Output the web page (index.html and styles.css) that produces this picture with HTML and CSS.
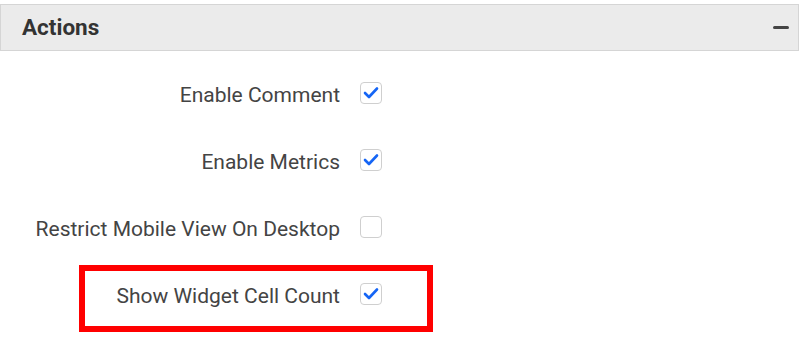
FILE: index.html
```html
<!DOCTYPE html>
<html>
<head>
<meta charset="utf-8">
<link rel="stylesheet" href="styles.css">
</head>
<body>
<div class="panel">
  <div class="panel-header">
    <span class="panel-title">Actions</span>
    <span class="collapse"></span>
  </div>
  <div class="rows">
    <div class="row">
      <span class="label">Enable Comment</span>
      <span class="checkbox checked"><svg viewBox="0 0 22 22" width="22" height="22"><polyline points="5,11 9,15 17,6.5" /></svg></span>
    </div>
    <div class="row">
      <span class="label">Enable Metrics</span>
      <span class="checkbox checked"><svg viewBox="0 0 22 22" width="22" height="22"><polyline points="5,11 9,15 17,6.5" /></svg></span>
    </div>
    <div class="row">
      <span class="label">Restrict Mobile View On Desktop</span>
      <span class="checkbox"></span>
    </div>
    <div class="row">
      <span class="label">Show Widget Cell Count</span>
      <span class="checkbox checked"><svg viewBox="0 0 22 22" width="22" height="22"><polyline points="5,11 9,15 17,6.5" /></svg></span>
    </div>
  </div>
  <div class="highlight"></div>
</div>
</body>
</html>
```

FILE: styles.css
```css
html, body {
  margin: 0;
  padding: 0;
  background: #ffffff;
}
body {
  font-family: Roboto, "Liberation Sans", sans-serif;
  width: 800px;
  height: 340px;
  overflow: hidden;
}
.panel {
  position: relative;
  padding-top: 4px;
}
.panel-header {
  box-sizing: border-box;
  width: 799px;
  height: 47px;
  background: #ebebeb;
  border: 1px solid #d5d5d5;
  display: flex;
  align-items: center;
  justify-content: space-between;
  padding: 0 9px 0 21px;
}
.panel-title {
  font-size: 22.5px;
  font-weight: 700;
  color: #333333;
  padding-bottom: 2px;
}
.collapse {
  display: block;
  width: 16px;
  height: 3px;
  border-radius: 1.5px;
  background: #444444;
}
.rows {
  display: flex;
  flex-direction: column;
  gap: 45px;
  padding-top: 31px;
}
.row {
  display: flex;
  align-items: center;
  height: 22px;
}
.label {
  width: 340px;
  text-align: right;
  font-size: 21px;
  color: #444444;
  padding-top: 3px;
}
.checkbox {
  box-sizing: border-box;
  margin-left: 20px;
  width: 22px;
  height: 22px;
  border: 1.5px solid #cfcfcf;
  border-radius: 4px;
  background: #fff;
  display: block;
  position: relative;
}
.checkbox svg {
  position: absolute;
  left: -1.5px;
  top: -1.5px;
}
.checkbox polyline {
  fill: none;
  stroke: #1565f5;
  stroke-width: 2.6;
  stroke-linecap: round;
  stroke-linejoin: round;
}
.highlight {
  position: absolute;
  left: 79px;
  top: 265px;
  width: 354px;
  height: 67px;
  box-sizing: border-box;
  border: 6px solid #ff0000;
}
```
